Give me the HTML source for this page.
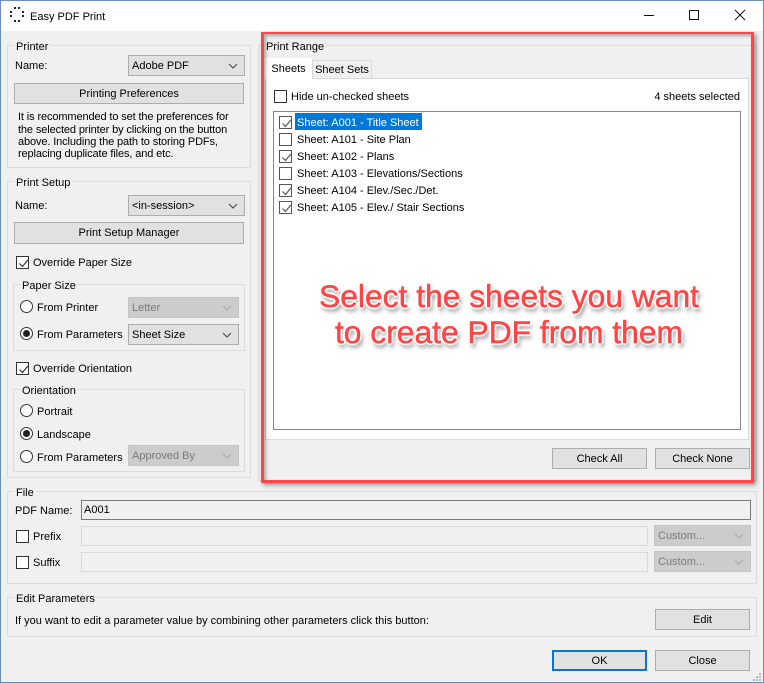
<!DOCTYPE html>
<html><head><meta charset="utf-8"><style>
html,body{margin:0;padding:0}
body{width:764px;height:683px;overflow:hidden;position:relative;background:#f0f0f0;font-family:"Liberation Sans",sans-serif;font-size:11px;color:#000}
div,svg,span.a{position:absolute;box-sizing:border-box}
.t{height:14px;line-height:16px;white-space:nowrap}
.g{border:1px solid #dcdcdc}
.l{background:#f0f0f0;padding:0 2px;height:14px;line-height:16px;white-space:nowrap}
.b{background:#e1e1e1;border:1px solid #adadad;text-align:center;line-height:21px;white-space:nowrap}
.c{background:#e1e1e1;border:1px solid #adadad;line-height:21px;padding-left:3px;white-space:nowrap}
.d{background:#cccccc;border:1px solid #c4c4c4;color:#7a7a7a}
.c svg{right:6px;top:7px}
.k{width:13px;height:13px;border:1px solid #333;background:#fff}
.ck{width:13px;height:13px;border:1px solid #333;background:#fff}
.ck svg{left:1px;top:1px}
.r{width:13px;height:13px;border:1px solid #333;border-radius:50%;background:#fff}
.r.on:after{content:"";position:absolute;left:2px;top:2px;width:7px;height:7px;border-radius:50%;background:#222}
</style></head><body>
<div style="left:0;top:0;width:764px;height:31px;background:#fff"></div>
<svg style="left:8px;top:6px" width="18" height="18"><g fill="#222"><rect x="6" y="1" width="2" height="2"/><rect x="10" y="1" width="2" height="2"/><rect x="14" y="5" width="2" height="2"/><rect x="14" y="9" width="2" height="2"/><rect x="6" y="14" width="2" height="2"/><rect x="10" y="14" width="2" height="2"/><rect x="2" y="5" width="2" height="2"/><rect x="2" y="9" width="2" height="2"/></g></svg>
<div class="t" style="left:30px;top:9px">Easy PDF Print</div>
<svg style="left:644px;top:5px" width="112" height="20" fill="none" stroke="#111" stroke-width="1"><path d="M0 10.500H10M45.500 5.500H54.500V14.500H45.500ZM91 5L101 15M101 5L91 15"/></svg>

<div class="g" style="left:7px;top:45px;width:244px;height:123px"></div>
<div class="l" style="left:14px;top:39px">Printer</div>
<div class="t" style="left:15px;top:58px">Name:</div>
<div class="c" style="left:128px;top:55px;width:117px;height:21px">Adobe PDF<svg width="10" height="6" fill="none" stroke="#444"><path d="M1 1L5 5L9 1"/></svg></div>
<div class="b" style="left:14px;top:83px;width:230px;height:21px">Printing Preferences</div>
<div class="t" style="left:18px;top:109px;letter-spacing:-.12px">It is recommended to set the preferences for</div>
<div class="t" style="left:18px;top:122px;letter-spacing:-.12px">the selected printer by clicking on the button</div>
<div class="t" style="left:18px;top:134px;letter-spacing:-.12px">above. Including the path to storing PDFs,</div>
<div class="t" style="left:18px;top:146px;letter-spacing:-.12px">replacing duplicate files, and etc.</div>

<div class="g" style="left:7px;top:181px;width:244px;height:297px"></div>
<div class="l" style="left:14px;top:175px">Print Setup</div>
<div class="t" style="left:15px;top:198px">Name:</div>
<div class="c" style="left:128px;top:195px;width:117px;height:21px">&lt;in-session&gt;<svg width="10" height="6" fill="none" stroke="#444"><path d="M1 1L5 5L9 1"/></svg></div>
<div class="b" style="left:14px;top:222px;width:230px;height:22px">Print Setup Manager</div>
<div class="ck" style="left:16px;top:256px"><svg width="11" height="11" fill="none" stroke="#333" stroke-width="1.200"><path d="M1.500 5.500L4.500 8.500L9.800 2"/></svg></div>
<div class="t" style="left:33px;top:255px">Override Paper Size</div>

<div class="g" style="left:13px;top:284px;width:232px;height:67px"></div>
<div class="l" style="left:20px;top:278px">Paper Size</div>
<div class="r" style="left:20px;top:300px"></div>
<div class="t" style="left:37px;top:300px">From Printer</div>
<div class="c d" style="left:128px;top:297px;width:111px;height:21px">Letter<svg width="10" height="6" fill="none" stroke="#a8a8a8"><path d="M1 1L5 5L9 1"/></svg></div>
<div class="r on" style="left:20px;top:327px"></div>
<div class="t" style="left:37px;top:327px">From Parameters</div>
<div class="c" style="left:128px;top:324px;width:111px;height:21px">Sheet Size<svg width="10" height="6" fill="none" stroke="#444"><path d="M1 1L5 5L9 1"/></svg></div>

<div class="ck" style="left:16px;top:362px"><svg width="11" height="11" fill="none" stroke="#333" stroke-width="1.200"><path d="M1.500 5.500L4.500 8.500L9.800 2"/></svg></div>
<div class="t" style="left:33px;top:361px">Override Orientation</div>

<div class="g" style="left:13px;top:389px;width:232px;height:83px"></div>
<div class="l" style="left:20px;top:383px">Orientation</div>
<div class="r" style="left:20px;top:404px"></div>
<div class="t" style="left:37px;top:404px">Portrait</div>
<div class="r on" style="left:20px;top:427px"></div>
<div class="t" style="left:37px;top:427px">Landscape</div>
<div class="r" style="left:20px;top:450px"></div>
<div class="t" style="left:37px;top:450px">From Parameters</div>
<div class="c d" style="left:128px;top:445px;width:111px;height:21px">Approved By<svg width="10" height="6" fill="none" stroke="#a8a8a8"><path d="M1 1L5 5L9 1"/></svg></div>

<div class="g" style="left:258px;top:45px;width:499px;height:436px"></div>
<div class="l" style="left:264px;top:39px">Print Range</div>
<div style="left:265px;top:78px;width:484px;height:362px;background:#fff;border:1px solid #d9d9d9"></div>
<div style="left:312px;top:60px;width:60px;height:19px;background:#f0f0f0;border:1px solid #d9d9d9;line-height:19px;text-align:center;white-space:nowrap">Sheet Sets</div>
<div style="left:265px;top:58px;width:47px;height:21px;background:#fff;border-top:1px solid #fff;line-height:20px;text-align:center">Sheets</div>
<div class="k" style="left:274px;top:90px"></div>
<div class="t" style="left:291px;top:89px">Hide un-checked sheets</div>
<div class="t" style="right:24px;top:89px">4 sheets selected</div>
<div style="left:273px;top:111px;width:468px;height:319px;background:#fff;border:1px solid #828790"></div>
<div style="left:295px;top:113px;width:127px;height:17px;background:#0078d7"></div>
<div class="ck" style="left:279px;top:116px;border-color:#555"><svg width="11" height="11" fill="none" stroke="#555" stroke-width="1.200"><path d="M1.500 5.500L4.500 8.500L9.800 2"/></svg></div>
<div class="k" style="left:279px;top:133px;border-color:#555"></div>
<div class="ck" style="left:279px;top:150px;border-color:#555"><svg width="11" height="11" fill="none" stroke="#555" stroke-width="1.200"><path d="M1.500 5.500L4.500 8.500L9.800 2"/></svg></div>
<div class="k" style="left:279px;top:167px;border-color:#555"></div>
<div class="ck" style="left:279px;top:184px;border-color:#555"><svg width="11" height="11" fill="none" stroke="#555" stroke-width="1.200"><path d="M1.500 5.500L4.500 8.500L9.800 2"/></svg></div>
<div class="ck" style="left:279px;top:201px;border-color:#555"><svg width="11" height="11" fill="none" stroke="#555" stroke-width="1.200"><path d="M1.500 5.500L4.500 8.500L9.800 2"/></svg></div>
<div class="t" style="left:297px;top:115px;color:#fff">Sheet: A001 - Title Sheet</div>
<div class="t" style="left:297px;top:132px">Sheet: A101 - Site Plan</div>
<div class="t" style="left:297px;top:149px">Sheet: A102 - Plans</div>
<div class="t" style="left:297px;top:166px">Sheet: A103 - Elevations/Sections</div>
<div class="t" style="left:297px;top:183px">Sheet: A104 - Elev./Sec./Det.</div>
<div class="t" style="left:297px;top:200px">Sheet: A105 - Elev./ Stair Sections</div>
<div class="b" style="left:552px;top:448px;width:95px;height:21px">Check All</div>
<div class="b" style="left:655px;top:448px;width:95px;height:21px">Check None</div>

<div style="left:261px;top:32px;width:493px;height:451px;border:solid #ff4545;border-width:2px 3px 3px 3px;box-shadow:2px 2px 4px rgba(0,0,0,.4),inset 2px 2px 3px rgba(0,0,0,.3)"></div>
<div style="left:261px;top:278px;width:496px;text-align:center;font-size:31.800px;line-height:36px;color:#ff4545;-webkit-text-stroke:.5px #ff4545;white-space:nowrap;text-shadow:1px 0 0 #fff,-1px 0 0 #fff,0 1px 0 #fff,0 -1px 0 #fff,1px 1px 0 #fff,-1px -1px 0 #fff,1px -1px 0 #fff,-1px 1px 0 #fff,2px 0 1px #fff,-2px 0 1px #fff,0 2px 1px #fff,0 -2px 1px #fff,2px 4px 4px rgba(0,0,0,.55)">Select the sheets you want<br>to create PDF from them</div>

<div class="g" style="left:7px;top:491px;width:750px;height:93px"></div>
<div class="l" style="left:14px;top:485px">File</div>
<div class="t" style="left:15px;top:503px">PDF Name:</div>
<div style="left:81px;top:500px;width:670px;height:20px;border:1px solid #7a7a7a;line-height:19px;padding-left:2px">A001</div>
<div class="k" style="left:16px;top:530px"></div>
<div class="t" style="left:33px;top:529px">Prefix</div>
<div style="left:81px;top:526px;width:567px;height:20px;border:1px solid #d9d9d9"></div>
<div class="c d" style="left:654px;top:525px;width:97px;height:21px">Custom...<svg width="10" height="6" fill="none" stroke="#a8a8a8"><path d="M1 1L5 5L9 1"/></svg></div>
<div class="k" style="left:16px;top:556px"></div>
<div class="t" style="left:33px;top:555px">Suffix</div>
<div style="left:81px;top:552px;width:567px;height:20px;border:1px solid #d9d9d9"></div>
<div class="c d" style="left:654px;top:551px;width:97px;height:21px">Custom...<svg width="10" height="6" fill="none" stroke="#a8a8a8"><path d="M1 1L5 5L9 1"/></svg></div>

<div class="g" style="left:7px;top:597px;width:750px;height:40px"></div>
<div class="l" style="left:14px;top:591px">Edit Parameters</div>
<div class="t" style="left:15px;top:613px">If you want to edit a parameter value by combining other parameters click this button:</div>
<div class="b" style="left:655px;top:609px;width:95px;height:21px">Edit</div>
<div class="b" style="left:552px;top:650px;width:95px;height:21px;border:2px solid #0078d7;line-height:19px">OK</div>
<div class="b" style="left:655px;top:650px;width:95px;height:21px">Close</div>

<div style="left:0;top:0;width:764px;height:683px;border:1px solid #6a8cb8"></div>
<svg style="left:753px;top:673px" width="10" height="9" fill="#bbb"><rect x="6" y="0" width="2" height="2"/><rect x="3" y="3" width="2" height="2"/><rect x="6" y="3" width="2" height="2"/><rect x="0" y="6" width="2" height="2"/><rect x="3" y="6" width="2" height="2"/><rect x="6" y="6" width="2" height="2"/></svg>
</body></html>
